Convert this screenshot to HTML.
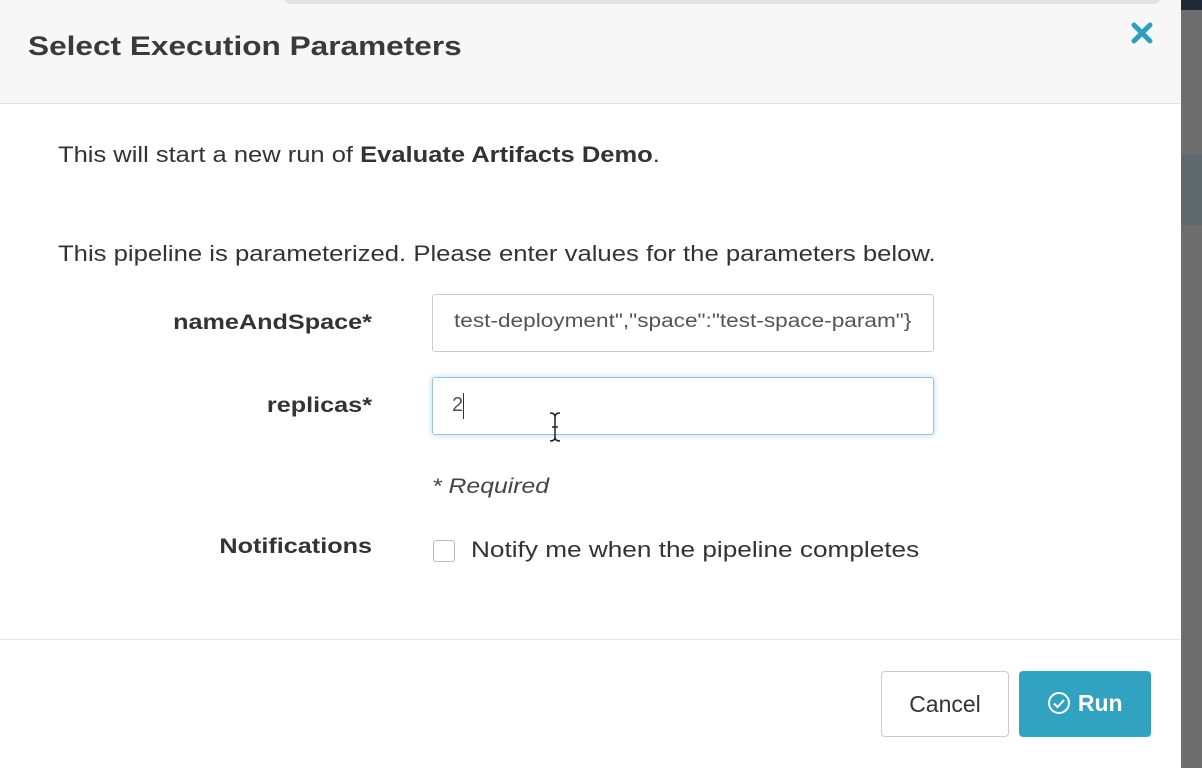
<!DOCTYPE html>
<html><head><style>
body{margin:0;width:1202px;height:768px;overflow:hidden;background:#6e6e6e;font-family:"Liberation Sans",sans-serif;position:relative}
.abs{position:absolute}
.modal{left:0;top:0;width:1181px;height:768px;background:#fff}
.hdr{left:0;top:0;width:1181px;height:103px;background:#f7f7f7;border-bottom:1px solid #e3e3e3}
.t{color:#333;white-space:nowrap;transform-origin:0 50%}
.inp{border:1px solid #ccc;border-radius:3px;background:#fff;box-sizing:border-box}
.lbl{font-weight:bold;font-size:21px;color:#333;text-align:right;width:300px;left:72px;transform:scaleX(1.2);transform-origin:100% 50%}
.btn{border-radius:4px;box-sizing:border-box;font-size:23px;text-align:center;line-height:64px}
</style></head><body>
<div class="abs" style="left:1181px;top:0;width:21px;height:10px;background:#1e2a36"></div>
<div class="abs" style="left:1181px;top:155px;width:21px;height:70px;background:#5f686b"></div>
<div class="abs modal"></div>
<div class="abs hdr"></div>
<div class="abs" style="left:285px;top:-8px;width:875px;height:12px;background:#e2e2e2;border-radius:5px"></div>
<div class="abs t" style="left:28px;top:31px;font-size:27px;font-weight:bold;color:#3a3a3a;transform:scaleX(1.17)">Select Execution Parameters</div>
<svg class="abs" style="left:1130px;top:22px" width="24" height="22" viewBox="0 0 24 22"><path d="M4 3L20 19M20 3L4 19" stroke="#2f9fbd" stroke-width="5" stroke-linecap="round"/></svg>
<div class="abs t" style="left:58px;top:142px;font-size:22px;transform:scaleX(1.16)">This will start a new run of <b>Evaluate Artifacts Demo</b>.</div>
<div class="abs t" style="left:58px;top:241px;font-size:22px;transform:scaleX(1.167)">This pipeline is parameterized. Please enter values for the parameters below.</div>
<div class="abs lbl" style="top:311px">nameAndSpace*</div>
<div class="abs lbl" style="top:394px">replicas*</div>
<div class="abs lbl" style="top:535px">Notifications</div>
<div class="abs inp" style="left:432px;top:294px;width:502px;height:58px"></div>
<div class="abs t" style="left:454px;top:311px;font-size:19px;color:#555;transform:scaleX(1.19)">test-deployment","space":"test-space-param"}</div>
<div class="abs inp" style="left:432px;top:377px;width:502px;height:58px;border-color:#9cc4dc;box-shadow:0 0 6px rgba(102,175,233,.5)"></div>
<div class="abs t" style="left:452px;top:394px;font-size:20px;color:#555">2</div>
<div class="abs" style="left:463px;top:393px;width:1px;height:26px;background:#333"></div>
<svg class="abs" style="left:548px;top:411px" width="14" height="32" viewBox="0 0 14 32"><path d="M2 2Q7 2 7 6V26Q7 30 2 30M12 2Q7 2 7 6M7 26Q7 30 12 30M4 16H10" fill="none" stroke="#222" stroke-width="1.5"/></svg>
<div class="abs t" style="left:432px;top:475px;font-size:21px;font-style:italic;color:#444;transform:scaleX(1.18)">* Required</div>
<div class="abs" style="left:433px;top:540px;width:22px;height:22px;border:1px solid #bbb;border-radius:3px;box-sizing:border-box"></div>
<div class="abs t" style="left:471px;top:537px;font-size:22px;transform:scaleX(1.19)">Notify me when the pipeline completes</div>
<div class="abs" style="left:0;top:639px;width:1181px;height:1px;background:#e5e5e5"></div>
<div class="abs btn" style="left:881px;top:671px;width:128px;height:66px;border:1px solid #ccc;color:#333;background:#fff">Cancel</div>
<div class="abs btn" style="left:1019px;top:671px;width:132px;height:66px;background:#31a3c0;color:#fff;font-weight:bold">
<svg style="vertical-align:-4px" width="24" height="24" viewBox="0 0 24 24"><circle cx="12" cy="12" r="10" fill="none" stroke="#fff" stroke-width="2"/><path d="M7 12.5l3.5 3.5L17 9" fill="none" stroke="#fff" stroke-width="2"/></svg> Run</div>
</body></html>
